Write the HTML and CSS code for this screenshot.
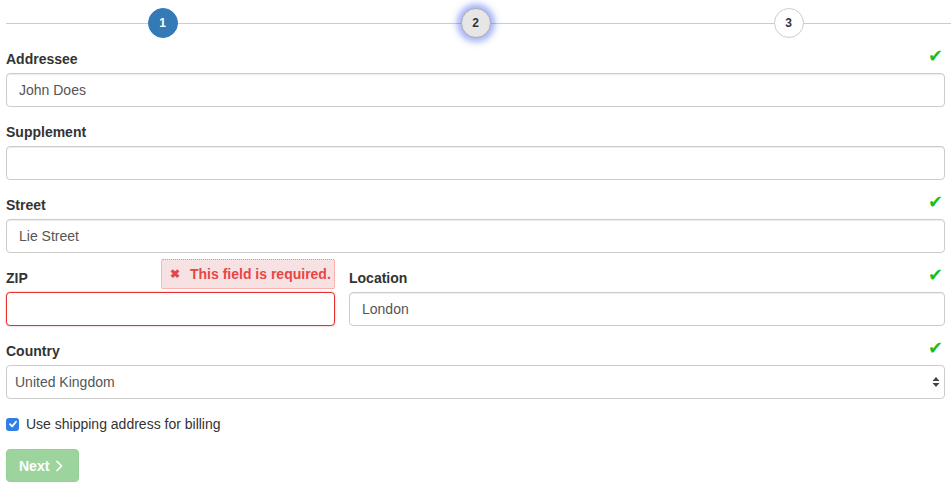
FILE: index.html
```html
<!DOCTYPE html>
<html>
<head>
<meta charset="utf-8">
<link rel="stylesheet" href="styles.css">
</head>
<body>
<div class="page">
  <div class="stepper">
    <div class="step"><span class="dot done">1</span></div>
    <div class="step"><span class="dot active">2</span></div>
    <div class="step"><span class="dot">3</span></div>
  </div>
  <form class="form">
    <div class="group">
      <div class="label-row"><label>Addressee</label><span class="ok">✔</span></div>
      <input class="input" type="text" value="John Does">
    </div>
    <div class="group">
      <div class="label-row"><label>Supplement</label></div>
      <input class="input" type="text" value="">
    </div>
    <div class="group">
      <div class="label-row"><label>Street</label><span class="ok">✔</span></div>
      <input class="input" type="text" value="Lie Street">
    </div>
    <div class="row">
      <div class="group zip">
        <div class="label-row"><label>ZIP</label></div>
        <input class="input invalid" type="text" value="">
        <div class="tip"><span class="x">✖</span>This field is required.</div>
      </div>
      <div class="group">
        <div class="label-row"><label>Location</label><span class="ok">✔</span></div>
        <input class="input" type="text" value="London">
      </div>
    </div>
    <div class="group">
      <div class="label-row"><label>Country</label><span class="ok">✔</span></div>
      <div class="select-wrap">
        <select class="select"><option>United Kingdom</option></select>
        <svg class="arrows" width="8" height="12" viewBox="0 0 8 12"><path d="M4 1 L7.5 5 H0.5 Z M4 11 L7.5 7 H0.5 Z" fill="#444"/></svg>
      </div>
    </div>
    <div class="check-row">
      <span class="cbox"><svg width="12" height="12" viewBox="0 0 12 12"><path d="M3 6.2 L5.2 8.4 L9 3.8" fill="none" stroke="#fff" stroke-width="1.8" stroke-linecap="round" stroke-linejoin="round"/></svg></span>
      <span>Use shipping address for billing</span>
    </div>
    <button type="button" class="btn">Next <svg width="8" height="12" viewBox="0 0 8 12"><path d="M1.5 1 L6.5 6 L1.5 11" fill="none" stroke="#fff" stroke-width="1.6"/></svg></button>
  </form>
</div>
</body>
</html>
```

FILE: styles.css
```css
* { box-sizing: border-box; }
body {
  margin: 0;
  font-family: "Liberation Sans", Arial, Helvetica, sans-serif;
  font-size: 14px;
  line-height: 20px;
  color: #333;
  background: #fff;
}
.page { padding: 0 6px; }
.stepper {
  display: grid;
  grid-template-columns: 1fr 1fr 1fr;
  height: 48px;
  margin: 0 -6px 0 -3px;
  padding: 0 6px 0 3px;
  background: linear-gradient(#ccc, #ccc) 3px 23px / calc(100% - 3px) 1px no-repeat;
}
.step {
  display: flex;
  justify-content: center;
  padding-top: 8px;
}
.dot {
  width: 30px;
  height: 30px;
  border-radius: 50%;
  border: 1px solid #ccc;
  background: #fff;
  display: flex;
  align-items: center;
  justify-content: center;
  font-size: 12px;
  font-weight: bold;
  color: #333;
}
.dot.done { background: #337ab7; border-color: #337ab7; color: #fff; }
.dot.active {
  background: #e6e6e6;
  border-color: #adadad;
  box-shadow: 0 0 6px 4px rgba(70, 100, 240, 0.5);
}
.form { display: flex; flex-direction: column; }
.group { margin-bottom: 14px; position: relative; }
.label-row {
  display: flex;
  justify-content: space-between;
  align-items: center;
  height: 20px;
  margin-bottom: 5px;
  padding-top: 1px;
}
label { font-weight: bold; }
.ok {
  color: #17c017;
  font-size: 18px;
  margin-right: 2px;
  margin-top: -6px;
}
.input {
  display: block;
  width: 100%;
  height: 34px;
  padding: 6px 12px;
  font: inherit;
  color: #555;
  border: 1px solid #ccc;
  border-radius: 4px;
  background: #fff;
  box-shadow: inset 0 1px 1px rgba(0,0,0,0.075);
}
.input.invalid {
  border-color: #e8302f;
  box-shadow: 0 0 2px rgba(232, 48, 47, 0.5);
}
.row {
  display: grid;
  grid-template-columns: 329fr 596fr;
  column-gap: 14px;
}
.tip {
  position: absolute;
  right: 0;
  top: -8px;
  height: 30px;
  width: 174px;
  padding: 0 6px 0 8px;
  display: flex;
  align-items: center;
  background: #f6e2e2;
  border: 1px dotted #f08b8b;
  border-radius: 2px;
  color: #e84646;
  font-weight: bold;
  font-size: 14px;
  white-space: nowrap;
}
.tip .x { font-size: 12px; margin-right: 10px; }
.select-wrap { position: relative; }
.select {
  display: block;
  width: 100%;
  height: 34px;
  padding: 6px 8px;
  font: inherit;
  color: #555;
  border: 1px solid #ccc;
  border-radius: 4px;
  background: #fff;
  -webkit-appearance: none;
  appearance: none;
}
.arrows { position: absolute; right: 5px; top: 11px; }
.check-row {
  display: flex;
  align-items: center;
  gap: 7px;
  height: 20px;
  margin-top: 1px;
  margin-bottom: 15px;
}
.cbox {
  width: 13px;
  height: 13px;
  border-radius: 3px;
  background: #2f7fe6;
  display: flex;
  align-items: center;
  justify-content: center;
}
.btn {
  align-self: flex-start;
  height: 33px;
  width: 73px;
  padding: 0 12px;
  font: inherit;
  font-weight: bold;
  font-size: 14px;
  color: #fff;
  background: #9dd49d;
  border: 1px solid #94cf94;
  border-radius: 4px;
  display: flex;
  align-items: center;
  gap: 6px;
}
```
